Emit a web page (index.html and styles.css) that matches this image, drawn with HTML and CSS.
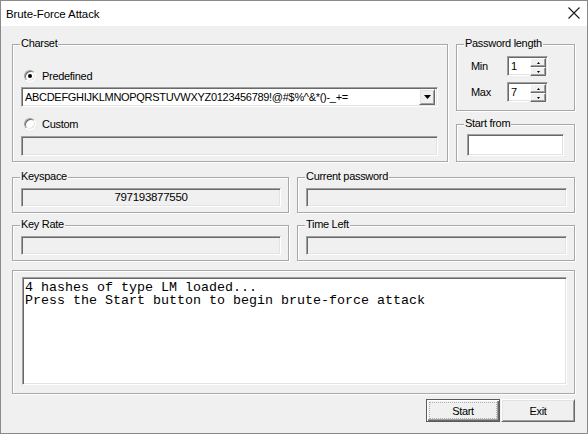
FILE: index.html
```html
<!DOCTYPE html>
<html>
<head>
<meta charset="utf-8">
<link rel="stylesheet" href="styles.css">
</head>
<body>
<div class="window">
  <div class="titlebar">
    <span class="title">Brute-Force Attack</span>
    <svg class="close" width="12" height="12" viewBox="0 0 12 12"><path d="M0.5 0.5 L11.5 11.5 M11.5 0.5 L0.5 11.5" stroke="#1a1a1a" stroke-width="1.1" fill="none"/></svg>
  </div>
  <div class="client">
    <div class="row1">
      <div class="group charset">
        <span class="legend">Charset</span>
        <div class="radio-row"><span class="radio checked"></span><span>Predefined</span></div>
        <div class="combo">
          <span class="combo-text">ABCDEFGHIJKLMNOPQRSTUVWXYZ0123456789!@#$%^&amp;*()-_+=</span>
          <span class="combo-btn"><svg width="7" height="4" viewBox="0 0 7 4"><path d="M0 0 H7 L3.5 4 Z" fill="#000"/></svg></span>
        </div>
        <div class="radio-row second"><span class="radio"></span><span>Custom</span></div>
        <div class="edit disabled custom-edit"></div>
      </div>
      <div class="rightcol">
        <div class="group pwlen">
          <span class="legend">Password length</span>
          <div class="spin-row">
            <span class="spin-label">Min</span>
            <div class="spin edit">
              <span class="spin-val">1</span>
              <div class="spin-btns">
                <span class="spin-btn"><svg width="3" height="2" viewBox="0 0 3 2"><path d="M1.5 0 L3 2 H0 Z" fill="#000"/></svg></span>
                <span class="spin-btn"><svg width="3" height="2" viewBox="0 0 3 2"><path d="M0 0 H3 L1.5 2 Z" fill="#000"/></svg></span>
              </div>
            </div>
          </div>
          <div class="spin-row">
            <span class="spin-label">Max</span>
            <div class="spin edit">
              <span class="spin-val">7</span>
              <div class="spin-btns">
                <span class="spin-btn"><svg width="3" height="2" viewBox="0 0 3 2"><path d="M1.5 0 L3 2 H0 Z" fill="#000"/></svg></span>
                <span class="spin-btn"><svg width="3" height="2" viewBox="0 0 3 2"><path d="M0 0 H3 L1.5 2 Z" fill="#000"/></svg></span>
              </div>
            </div>
          </div>
        </div>
        <div class="group startfrom">
          <span class="legend">Start from</span>
          <div class="edit white start-edit"></div>
        </div>
      </div>
    </div>
    <div class="row2">
      <div class="group small">
        <span class="legend">Keyspace</span>
        <div class="edit disabled small-edit center">797193877550</div>
      </div>
      <div class="group small">
        <span class="legend">Current password</span>
        <div class="edit disabled small-edit"></div>
      </div>
      <div class="group small">
        <span class="legend">Key Rate</span>
        <div class="edit disabled small-edit"></div>
      </div>
      <div class="group small">
        <span class="legend">Time Left</span>
        <div class="edit disabled small-edit"></div>
      </div>
    </div>
    <div class="group log">
      <div class="edit white textarea">4 hashes of type LM loaded...
Press the Start button to begin brute-force attack</div>
    </div>
    <div class="buttons">
      <div class="btn default"><span>Start</span></div>
      <div class="btn"><span>Exit</span></div>
    </div>
  </div>
</div>
</body>
</html>
```

FILE: styles.css
```css
* { box-sizing: border-box; }
html, body { margin: 0; padding: 0; background: #f0f0f0; }
body {
  font-family: "Liberation Sans", Arial, sans-serif;
  font-size: 11px;
  letter-spacing: -0.3px;
  color: #000;
}
.window {
  width: 588px;
  height: 434px;
  border: 1px solid #8a8a8a;
  background: #f0f0f0;
  display: flex;
  flex-direction: column;
}
.titlebar {
  height: 25px;
  background: #fff;
  display: flex;
  align-items: center;
  justify-content: space-between;
  padding: 0 7px 0 5px;
  flex: none;
}
.title {
  font-size: 11.5px;
  letter-spacing: -0.1px;
}
.close { display: block; margin-top: -1px; }
.client {
  padding: 18px 12px 0 11px;
  display: flex;
  flex-direction: column;
}
.group {
  position: relative;
  border: 1px solid #a8a8a8;
  box-shadow: inset 1px 1px #fff, 1px 1px #fff;
}
.legend {
  position: absolute;
  top: -8px;
  left: 7px;
  padding: 0 1px;
  line-height: 13px;
  background: #f0f0f0;
  white-space: nowrap;
}
.row1 {
  display: flex;
  gap: 8px;
}
.charset {
  width: 436px;
  height: 118px;
  padding: 24px 9px 0 8px;
}
.radio-row {
  display: flex;
  align-items: center;
  height: 14px;
  gap: 6px;
  padding-left: 3px;
}
.radio-row.second { margin-top: 10px; }
.radio {
  width: 12px;
  height: 12px;
  border-radius: 50%;
  background: #fff;
  border: 1px solid;
  border-color: #a0a0a0 #fff #fff #a0a0a0;
  box-shadow: inset 1px 1px #696969, inset -1px -1px #e3e3e3;
  position: relative;
  flex: none;
}
.radio.checked::after {
  content: "";
  position: absolute;
  left: 3px;
  top: 3px;
  width: 4px;
  height: 4px;
  border-radius: 50%;
  background: #000;
}
.edit {
  border: 1px solid;
  border-color: #a0a0a0 #fff #fff #a0a0a0;
  box-shadow: inset 1px 1px #696969, inset -1px -1px #e3e3e3;
}
.white { background: #fff; }
.disabled { background: #f0f0f0; }
.combo {
  margin-top: 4px;
  height: 20px;
  background: #fff;
  border: 1px solid;
  border-color: #a0a0a0 #fff #fff #a0a0a0;
  box-shadow: inset 1px 1px #696969, inset -1px -1px #e3e3e3;
  display: flex;
  align-items: center;
  justify-content: space-between;
  padding: 2px 2px 2px 3px;
}
.combo-text { white-space: nowrap; }
.combo-btn {
  width: 16px;
  height: 16px;
  border: 1px solid;
  border-color: #fff #696969 #696969 #fff;
  box-shadow: inset 1px 1px #e3e3e3, inset -1px -1px #a0a0a0;
  background: #f0f0f0;
  display: flex;
  align-items: center;
  justify-content: center;
}
.combo-btn svg { display: block; }
.custom-edit {
  margin-top: 5px;
  height: 20px;
}
.rightcol {
  width: 119px;
  display: flex;
  flex-direction: column;
  gap: 13px;
}
.pwlen {
  height: 67px;
  padding: 11px 0 0 14px;
  display: flex;
  flex-direction: column;
  gap: 6px;
}
.spin-row {
  display: flex;
  align-items: center;
  height: 20px;
}
.spin-label { width: 36px; }
.spin {
  width: 41px;
  height: 20px;
  background: #fff;
  display: flex;
  justify-content: space-between;
  padding: 1px 1px 1px 3px;
}
.spin-val { line-height: 16px; }
.spin-btns {
  display: flex;
  flex-direction: column;
  width: 16px;
  height: 18px;
}
.spin-btn {
  flex: 1;
  border: 1px solid;
  border-color: #fff #696969 #696969 #fff;
  box-shadow: inset -1px -1px #a0a0a0;
  background: #f0f0f0;
  display: flex;
  align-items: center;
  justify-content: center;
}
.spin-btn svg { display: block; }
.startfrom {
  height: 38px;
  padding: 9px 0 0 10px;
}
.start-edit {
  width: 97px;
  height: 22px;
}
.row2 {
  margin-top: 15px;
  display: grid;
  grid-template-columns: 277px 278px;
  column-gap: 8px;
  row-gap: 12px;
}
.small {
  height: 36px;
  padding: 10px 7px 0 8px;
}
.small-edit {
  height: 19px;
  line-height: 17px;
  font-size: 11.5px;
}
.center { text-align: center; }
.log {
  margin-top: 9px;
  height: 124px;
  padding: 6px 0 0 9px;
}
.textarea {
  width: 545px;
  height: 108px;
  white-space: pre;
  font-family: "Liberation Mono", "Courier New", monospace;
  font-size: 13.33px;
  letter-spacing: 0;
  line-height: 13px;
  padding: 3px 2px;
}
.buttons {
  margin-top: 5px;
  display: flex;
  justify-content: flex-end;
  gap: 1px;
}
.btn {
  width: 74px;
  height: 23px;
  border: 1px solid;
  border-color: #fff #696969 #696969 #fff;
  box-shadow: inset 1px 1px #e3e3e3, inset -1px -1px #a0a0a0;
  display: flex;
  align-items: center;
  justify-content: center;
  background: #f0f0f0;
}
.btn.default {
  border-color: #5a5a5a;
  box-shadow: inset 1px 1px #fff, inset -1px -1px #696969, inset -2px -2px #a0a0a0;
}
.btn.default span {
  outline: 1px dotted #b0b0b0;
  outline-offset: 0;
  display: flex;
  align-items: center;
  justify-content: center;
  width: 66px;
  height: 15px;
}
```
